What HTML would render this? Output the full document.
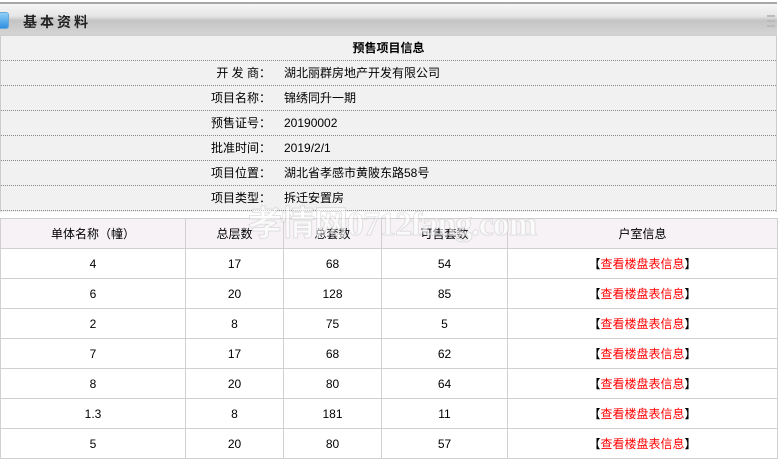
<!DOCTYPE html>
<html><head><meta charset="utf-8"><style>
*{margin:0;padding:0;box-sizing:border-box}
body{width:779px;height:461px;background:#fff;font-family:"Liberation Sans","Noto Sans CJK SC",sans-serif;font-size:12px;color:#000;position:relative;overflow:hidden}
.hd{position:absolute;left:0;top:2px;width:777px;height:34px;border-top:2px solid #a8a8a8;border-bottom:2px solid #d0d0d0;background:linear-gradient(#f6f6f6 0%,#e6e6e6 40%,#c4c4c4 55%,#d4d4d4 100%)}
.hd .ic{position:absolute;left:0;top:8px;width:9px;height:17px;background:linear-gradient(#8fd0f8,#2e8fe0);border:1px solid #6aa8d8;border-left:none;border-radius:0 3px 3px 0}
.hd .t{position:absolute;left:23px;top:8px;font-size:14px;font-weight:bold;letter-spacing:3px;color:#222}
.hd .m{position:absolute;right:2px;top:11px;width:8px;height:12px;border-top:2px solid #bbb;border-bottom:2px solid #bbb}
.hd .m:after{content:"";position:absolute;left:0;right:0;top:3px;height:2px;background:#bbb}
.info{position:absolute;left:0;top:36px;width:777px;height:176px;background:#f1f1f1;border-left:1px solid #ccc;border-right:1px solid #ccc}
.row{height:25px;border-bottom:1px dotted #888;line-height:24px;position:relative}
.row .l{position:absolute;right:505px;width:100px;text-align:right;}
.row .v{position:absolute;left:283px}
.ttl{text-align:center;font-weight:bold}
table{position:absolute;left:0;top:218px;width:778px;border-collapse:collapse}
td{border:1px solid #d0d0d0;text-align:center;height:30px;font-size:12px}
tr.h td{background:#f6f2f6;height:30px}
.r{color:#f00}
.wm{position:absolute;left:248px;top:196px;font-size:34px;font-weight:bold;color:rgba(255,255,255,.6);-webkit-text-stroke:1px rgba(170,170,170,.3);font-family:"Liberation Serif","Noto Sans CJK SC",serif;letter-spacing:-1px}
</style></head><body>
<div class="hd"><div class="ic"></div><div class="t">基本资料</div><div class="m"></div></div>
<div class="info">
<div class="row ttl">预售项目信息</div>
<div class="row"><div class="l">开 发 商：</div><div class="v">湖北丽群房地产开发有限公司</div></div>
<div class="row"><div class="l">项目名称：</div><div class="v">锦绣同升一期</div></div>
<div class="row"><div class="l">预售证号：</div><div class="v">20190002</div></div>
<div class="row"><div class="l">批准时间：</div><div class="v">2019/2/1</div></div>
<div class="row"><div class="l">项目位置：</div><div class="v">湖北省孝感市黄陂东路58号</div></div>
<div class="row"><div class="l">项目类型：</div><div class="v">拆迁安置房</div></div>
</div>
<table>
<colgroup><col style="width:185px"><col style="width:98px"><col style="width:98px"><col style="width:126px"><col></colgroup>
<tr class="h"><td>单体名称（幢）</td><td>总层数</td><td>总套数</td><td>可售套数</td><td>户室信息</td></tr>
<tr><td>4</td><td>17</td><td>68</td><td>54</td><td>【<span class="r">查看楼盘表信息</span>】</td></tr>
<tr><td>6</td><td>20</td><td>128</td><td>85</td><td>【<span class="r">查看楼盘表信息</span>】</td></tr>
<tr><td>2</td><td>8</td><td>75</td><td>5</td><td>【<span class="r">查看楼盘表信息</span>】</td></tr>
<tr><td>7</td><td>17</td><td>68</td><td>62</td><td>【<span class="r">查看楼盘表信息</span>】</td></tr>
<tr><td>8</td><td>20</td><td>80</td><td>64</td><td>【<span class="r">查看楼盘表信息</span>】</td></tr>
<tr><td>1.3</td><td>8</td><td>181</td><td>11</td><td>【<span class="r">查看楼盘表信息</span>】</td></tr>
<tr><td>5</td><td>20</td><td>80</td><td>57</td><td>【<span class="r">查看楼盘表信息</span>】</td></tr>
</table>
<div class="wm">孝情网0712fang.com</div>
</body></html>
